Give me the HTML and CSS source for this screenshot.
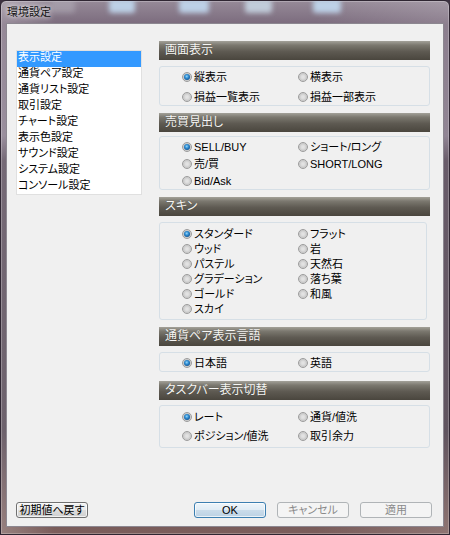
FILE: index.html
```html
<!DOCTYPE html>
<html lang="ja">
<head>
<meta charset="utf-8">
<title>環境設定</title>
<link rel="stylesheet" href="styles.css">
</head>
<body>
<div class="window">
  <!-- desktop icons blurred behind the glass frame -->
  <div class="backdrop-icon bi-1"></div>
  <div class="backdrop-icon bi-2"></div>
  <div class="backdrop-icon bi-3"></div>
  <div class="backdrop-icon bi-4"></div>
  <div class="backdrop-icon bi-5"></div>

  <div class="titlebar">環境設定</div>

  <div class="client">
    <div class="main">
      <ul class="nav">
        <li class="nav-item active">表示設定</li>
        <li class="nav-item">通貨ペア設定</li>
        <li class="nav-item">通貨リスト設定</li>
        <li class="nav-item">取引設定</li>
        <li class="nav-item">チャート設定</li>
        <li class="nav-item">表示色設定</li>
        <li class="nav-item">サウンド設定</li>
        <li class="nav-item">システム設定</li>
        <li class="nav-item">コンソール設定</li>
      </ul>

      <div class="panel">
        <section class="sec sec-screen">
          <h2 class="sec-head">画面表示</h2>
          <div class="group g-screen">
            <label class="opt"><span class="radio on"></span>縦表示</label>
            <label class="opt"><span class="radio"></span>横表示</label>
            <label class="opt"><span class="radio"></span>損益一覧表示</label>
            <label class="opt"><span class="radio"></span>損益一部表示</label>
          </div>
        </section>

        <section class="sec sec-trade">
          <h2 class="sec-head">売買見出し</h2>
          <div class="group g-trade">
            <label class="opt"><span class="radio on"></span>SELL/BUY</label>
            <label class="opt"><span class="radio"></span>ショート/ロング</label>
            <label class="opt"><span class="radio"></span>売/買</label>
            <label class="opt"><span class="radio"></span>SHORT/LONG</label>
            <label class="opt"><span class="radio"></span>Bid/Ask</label>
          </div>
        </section>

        <section class="sec sec-skin">
          <h2 class="sec-head">スキン</h2>
          <div class="group g-skin">
            <label class="opt"><span class="radio on"></span>スタンダード</label>
            <label class="opt"><span class="radio"></span>フラット</label>
            <label class="opt"><span class="radio"></span>ウッド</label>
            <label class="opt"><span class="radio"></span>岩</label>
            <label class="opt"><span class="radio"></span>パステル</label>
            <label class="opt"><span class="radio"></span>天然石</label>
            <label class="opt"><span class="radio"></span>グラデーション</label>
            <label class="opt"><span class="radio"></span>落ち葉</label>
            <label class="opt"><span class="radio"></span>ゴールド</label>
            <label class="opt"><span class="radio"></span>和風</label>
            <label class="opt"><span class="radio"></span>スカイ</label>
          </div>
        </section>

        <section class="sec sec-lang">
          <h2 class="sec-head">通貨ペア表示言語</h2>
          <div class="group g-lang">
            <label class="opt"><span class="radio on"></span>日本語</label>
            <label class="opt"><span class="radio"></span>英語</label>
          </div>
        </section>

        <section class="sec sec-task">
          <h2 class="sec-head">タスクバー表示切替</h2>
          <div class="group g-task">
            <label class="opt"><span class="radio on"></span>レート</label>
            <label class="opt"><span class="radio"></span>通貨/値洗</label>
            <label class="opt"><span class="radio"></span>ポジション/値洗</label>
            <label class="opt"><span class="radio"></span>取引余力</label>
          </div>
        </section>
      </div>
    </div>

    <div class="footer">
      <button class="btn">初期値へ戻す</button>
      <div class="actions">
        <button class="btn btn-default">OK</button>
        <button class="btn" disabled>キャンセル</button>
        <button class="btn" disabled>適用</button>
      </div>
    </div>
  </div>
</div>
</body>
</html>
```

FILE: styles.css
```css
* {
  box-sizing: border-box;
}

html,
body {
  margin: 0;
  padding: 0;
}

body {
  width: 450px;
  height: 535px;
  overflow: hidden;
  background: #3d3140;
  font-family: "Liberation Sans", "Noto Sans CJK JP", sans-serif;
  font-size: 11px;
  font-feature-settings: "palt";
  color: #000;
}

/* ---------- glass window frame ---------- */
.window {
  position: relative;
  width: 450px;
  height: 535px;
  display: flex;
  flex-direction: column;
  padding: 0 5px 7px;
  border: 1px solid #2f2632;
  border-radius: 6px 6px 0 0;
  overflow: hidden;
  background:
    linear-gradient(90deg, rgba(255, 255, 255, 0.22) 0, rgba(255, 255, 255, 0) 12%, rgba(255, 255, 255, 0) 70%, rgba(255, 255, 255, 0.14) 100%),
    linear-gradient(180deg, #968a98 0, #7a6a7c 24px, #7f7183 135px, #514252 160px, #473946 430px, #6c5254 500px, #7d5f5c 535px);
  box-shadow: inset 0 0 0 1px rgba(255, 255, 255, 0.25);
}

.backdrop-icon {
  position: absolute;
  top: -2px;
  height: 14px;
  border-radius: 3px;
  background: rgba(196, 222, 246, 0.85);
  filter: blur(2.5px);
}

.bi-1 { left: 50px; width: 24px; background: rgba(200, 200, 210, 0.35); }
.bi-2 { left: 108px; width: 26px; }
.bi-3 { left: 178px; width: 30px; }
.bi-4 { left: 244px; width: 27px; background: rgba(205, 222, 236, 0.8); }
.bi-5 { left: 312px; width: 28px; }

.titlebar {
  position: relative;
  height: 22px;
  flex: none;
  padding-left: 1px;
  line-height: 22px;
  font-size: 11px;
  color: #111;
  text-shadow: 0 0 4px rgba(255, 255, 255, 0.9), 0 0 8px rgba(255, 255, 255, 0.7);
}

/* ---------- dialog client area ---------- */
.client {
  position: relative;
  flex: 1;
  display: flex;
  flex-direction: column;
  padding: 17px 0 8px;
  background: #f0f0f0;
  border: 1px solid #8c8790;
}

.main {
  flex: 1;
  display: flex;
  align-items: flex-start;
  padding: 0 13px 0 9px;
}

/* category list */
.nav {
  width: 126px;
  height: 145px;
  margin: 9px 0 0;
  padding: 0;
  list-style: none;
  background: #fff;
  border: 1px solid #e0e0e0;
  overflow: hidden;
}

.nav-item {
  height: 16px;
  padding-left: 1px;
  line-height: 13px;
  white-space: nowrap;
}

.nav-item.active {
  background: #3399ff;
  color: #fff;
}

/* settings panel */
.panel {
  width: 271px;
  margin-left: 17px;
  display: flex;
  flex-direction: column;
}

.sec {
  margin-top: 7px;
}

.sec-screen { margin-top: 0; }
.sec-task { margin-top: 9px; }

.sec-head {
  height: 19px;
  margin: 0 0 6px;
  padding-left: 6px;
  font-size: 12px;
  font-weight: normal;
  line-height: 19px;
  color: #f6f6f4;
  text-shadow: 0 0 1px rgba(0, 0, 0, 0.35);
  background: linear-gradient(180deg, #a3a199 0, #7b786f 22%, #5e5a52 55%, #4a463e 100%);
}

.sec-trade .sec-head { margin-bottom: 4px; }
.sec-task .sec-head { margin-bottom: 5px; }

.group {
  display: grid;
  grid-template-columns: 116px 1fr;
  padding-left: 22px;
  border: 1px solid #d6dfe6;
  border-radius: 3px;
}

.g-screen {
  padding-top: 2px;
  grid-auto-rows: 16px;
  row-gap: 4px;
}

.g-trade {
  padding-top: 1px;
  grid-auto-rows: 17px;
}

.g-skin {
  width: 268px;
  padding-top: 3px;
  padding-bottom: 3px;
  grid-auto-rows: 15px;
}

.g-lang {
  padding-top: 2px;
  grid-auto-rows: 16px;
}

.g-task {
  padding-top: 3px;
  padding-bottom: 3px;
  grid-auto-rows: 16px;
  row-gap: 3px;
}

.opt {
  display: flex;
  align-items: center;
  gap: 2px;
  white-space: nowrap;
  line-height: 14px;
}

/* Aero style radio button */
.radio {
  position: relative;
  flex: none;
  width: 10px;
  height: 10px;
  border-radius: 50%;
  border: 1px solid #9c9c9c;
  background: radial-gradient(circle at 50% 50%, #e6e6e6 0, #dcdcdc 35%, #c9c9c9 60%, #f5f5f5 100%);
}

.radio.on::after {
  content: "";
  position: absolute;
  inset: 1px;
  border-radius: 50%;
  background: radial-gradient(circle at 45% 40%, #9ad6f7 0, #3291d6 35%, #145a9a 70%, #0b3866 100%);
}

/* ---------- bottom buttons ---------- */
.footer {
  flex: none;
  display: flex;
  justify-content: space-between;
  align-items: center;
  height: 16px;
  padding: 0 11px 0 9px;
}

.actions {
  display: flex;
  gap: 11px;
}

.btn {
  width: 72px;
  height: 16px;
  padding: 0;
  font: inherit;
  font-size: 11px;
  line-height: 14px;
  color: #000;
  border: 1px solid #707070;
  border-radius: 3px;
  background: linear-gradient(180deg, #f2f2f2 0, #ebebeb 50%, #dddddd 50%, #cfcfcf 100%);
  box-shadow: inset 0 0 0 1px rgba(255, 255, 255, 0.7);
}

.btn-default {
  border-color: #3c7fb1;
  background: linear-gradient(180deg, #eef5fa 0, #e0ecf5 50%, #cbdcea 50%, #bcd2e4 100%);
}

.btn:disabled {
  color: #8a8a8a;
  border-color: #b0b4b7;
  background: #f4f4f4;
  box-shadow: none;
}
```
